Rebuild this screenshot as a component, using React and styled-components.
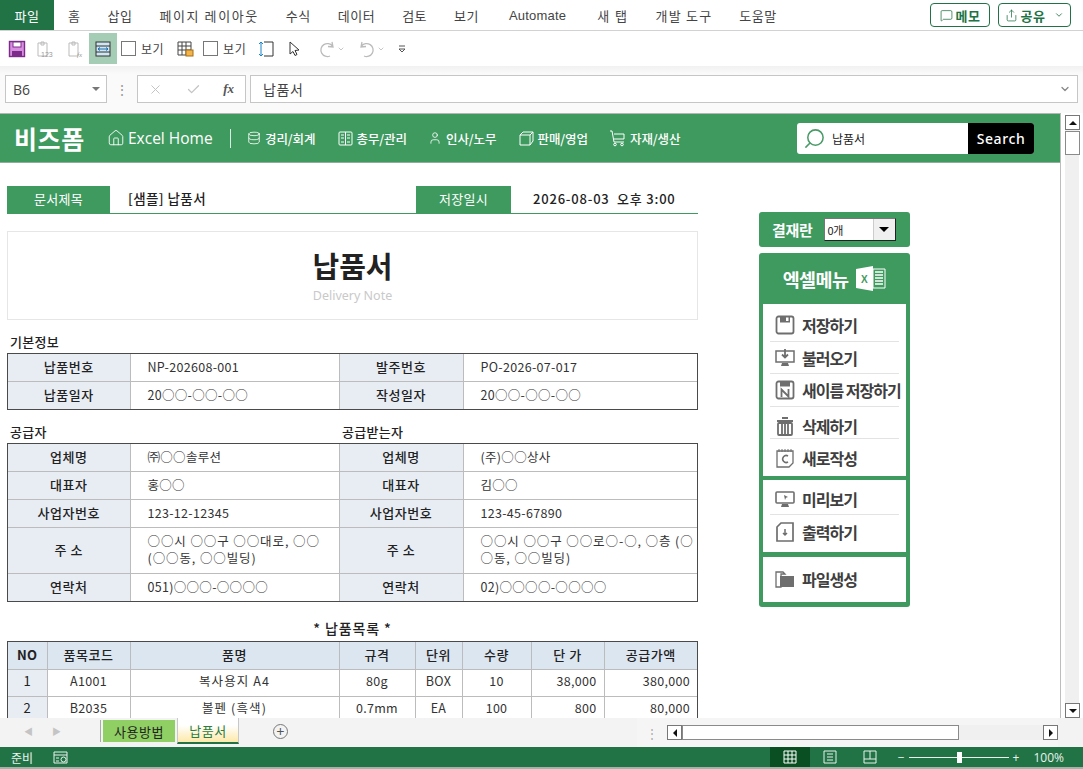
import styled, { createGlobalStyle } from 'styled-components'
import { Home, Database, User, Search as SearchIcon, X, Check, ChevronDown, MessageSquare, Share } from 'lucide-react'

const KR = `"Noto Sans CJK KR", "Noto Sans", sans-serif`
const GREEN = '#3f9a60'
const XL = '#217346'

const Global = createGlobalStyle`
  html, body { margin: 0; padding: 0; overflow: hidden; background: #fff; }
  #root { width: 1083px; height: 769px; overflow: hidden; }
  * { box-sizing: border-box; }
`

const Window = styled.div`
  width: 1083px;
  height: 769px;
  display: flex;
  flex-direction: column;
  font-family: ${KR};
  color: #222;
  background: #f3f3f3;
`

/* ribbon */
const TabBar = styled.div`
  height: 31px;
  flex: none;
  display: flex;
  align-items: center;
  background: #fff;
  border-bottom: 1px solid #d2d2d2;
  padding-right: 12px;
`
const FileTab = styled.div`
  width: 54px;
  height: 30px;
  margin-right: 14px;
  background: ${XL};
  color: #fff;
  font-size: 13px;
  letter-spacing: 0.6px;
  display: flex;
  align-items: center;
  justify-content: center;
`
const RibbonTab = styled.div`
  font-size: 13px;
  color: #444;
  margin-right: ${p => p.$mr || '27px'};
  letter-spacing: ${p => p.$sp || '0.5px'};
  margin-left: ${p => p.$ml || 0};
  font-family: ${p => (p.$latin ? '"Liberation Sans", sans-serif' : KR)};
  white-space: nowrap;
`
const TabRight = styled.div`
  margin-left: auto;
  display: flex;
  gap: 8px;
`
const OutlineBtn = styled.div`
  height: 24px;
  width: ${p => p.$w};
  border: 1px solid ${XL};
  border-radius: 4px;
  display: flex;
  align-items: center;
  justify-content: center;
  gap: 3px;
  color: ${XL};
  font-size: 13px;
  font-weight: 700;
  letter-spacing: 0.5px;
`

const Qat = styled.div`
  height: 35px;
  flex: none;
  background: #fff;
  display: flex;
  align-items: center;
  padding-left: 5px;
`
const QatBtn = styled.div`
  width: ${p => p.$w || '28px'};
  height: 31px;
  display: flex;
  align-items: center;
  justify-content: center;
  flex: none;
  background: ${p => (p.$on ? '#a5cdb5' : 'transparent')};
`
const QatCheck = styled.label`
  display: flex;
  align-items: center;
  gap: 5px;
  font-size: 12px;
  color: #444;
  letter-spacing: 0.5px;
  margin: 0 ${p => p.$mr} 0 ${p => p.$ml};
  flex: none;
  &::before {
    content: '';
    width: 13px;
    height: 13px;
    border: 1px solid #777;
    background: #fff;
  }
`

const FormulaBar = styled.div`
  height: 47px;
  flex: none;
  padding: 9px 5px 9px 5px;
  display: flex;
  align-items: stretch;
  background: linear-gradient(#f1f1f1 0, #fafafa 8px, #fafafa 100%);
`
const NameBox = styled.div`
  width: 102px;
  height: 28px;
  background: #fff;
  border: 1px solid #c6c6c6;
  display: flex;
  align-items: center;
  justify-content: space-between;
  padding: 0 6px 0 7px;
  font-size: 14px;
  color: #444;
  font-family: "Open Sans", sans-serif;
`
const Caret = styled.span`
  width: 0;
  height: 0;
  border-left: 4px solid transparent;
  border-right: 4px solid transparent;
  border-top: 4px solid #777;
`
const Dots = styled.div`
  width: 30px;
  height: 28px;
  display: flex;
  align-items: center;
  justify-content: center;
  color: #999;
  font-size: 14px;
`
const FxBox = styled.div`
  width: 109px;
  height: 28px;
  background: #fff;
  border: 1px solid #c6c6c6;
  display: flex;
  align-items: center;
  justify-content: space-between;
  padding: 0 11px 0 10px;
  color: #c4c4c4;
`
const Fx = styled.span`
  font: italic 700 13px "Liberation Serif", serif;
  color: #555;
`
const FormulaInput = styled.div`
  flex: 1;
  height: 28px;
  margin-left: 4px;
  background: #fff;
  border: 1px solid #c6c6c6;
  display: flex;
  align-items: center;
  justify-content: space-between;
  padding: 0 6px 0 12px;
  font-size: 14px;
  color: #444;
  letter-spacing: 0.6px;
`

/* sheet */
const SheetRow = styled.div`
  height: 605px;
  flex: none;
  display: flex;
  background: #fff;
`
const Sheet = styled.div`
  width: 1061px;
  height: 605px;
  overflow: hidden;
  background: #fff;
  border-top: 1px solid #b5b5b5;
  border-right: 1px solid #bdbdbd;
`
const VScroll = styled.div`
  width: 22px;
  background: #fff;
  display: flex;
  flex-direction: column;
  padding: 2px 4px 0 4px;
`
const VTrack = styled.div`
  flex: 1;
  background: #f0f0f0;
  display: flex;
  flex-direction: column;
  justify-content: space-between;
`
const ArrowBtn = styled.div`
  width: ${p => p.$w || '15px'};
  height: ${p => p.$h || '15px'};
  background: #fff;
  border: 1px solid #777;
  display: flex;
  align-items: center;
  justify-content: center;
  flex: none;
  &::after {
    content: '';
    width: 0;
    height: 0;
    border-style: solid;
    border-color: transparent;
    ${p => p.$dir === 'up' && 'border-width: 0 4px 4px; border-bottom-color: #111;'}
    ${p => p.$dir === 'down' && 'border-width: 4px 4px 0; border-top-color: #111;'}
    ${p => p.$dir === 'left' && 'border-width: 4px 4px 4px 0; border-right-color: #111;'}
    ${p => p.$dir === 'right' && 'border-width: 4px 0 4px 4px; border-left-color: #111;'}
  }
`
const VThumb = styled.div`
  width: 15px;
  height: 24px;
  margin-top: 1px;
  background: #fff;
  border: 1px solid #8a8a8a;
`

const Header = styled.div`
  height: 49px;
  background: ${GREEN};
  border-bottom: 1px solid #8fae9a;
  display: flex;
  align-items: center;
  padding: 0 26px 0 14px;
  color: #fff;
`
const Brand = styled.div`
  font-size: 25px;
  font-weight: 700;
  width: 93px;
  letter-spacing: 0.6px;
`
const HomeLink = styled.div`
  display: flex;
  align-items: center;
  gap: 3px;
  font-size: 15.5px;
  font-family: "Open Sans", sans-serif;
  width: 123px;
  white-space: nowrap;
`
const Divider = styled.div`
  width: 1px;
  height: 19px;
  background: #d8ecdf;
  margin-right: 16px;
`
const NavLink = styled.div`
  width: 90.5px;
  flex: none;
  display: flex;
  align-items: center;
  gap: 4px;
  font-size: 12.5px;
  font-weight: 500;
  letter-spacing: -0.1px;
  white-space: nowrap;
`
const SearchBox = styled.div`
  margin-left: auto;
  width: 237px;
  height: 31px;
  display: flex;
  background: #fff;
  border-radius: 3px;
  overflow: hidden;
`
const SearchField = styled.div`
  flex: 1;
  display: flex;
  align-items: center;
  gap: 6px;
  padding-left: 6px;
  font-size: 12px;
  color: #222;
`
const SearchBtn = styled.div`
  width: 66px;
  background: #000;
  color: #fff;
  font-size: 14px;
  font-weight: 500;
  letter-spacing: 0.6px;
  font-family: "Noto Sans", sans-serif;
  display: flex;
  align-items: center;
  justify-content: center;
`

const Body = styled.div`
  display: flex;
  align-items: flex-start;
  padding-left: 7px;
`
const LeftCol = styled.div`
  width: 691px;
  flex: none;
  padding-top: 23px;
`
const DocRow = styled.div`
  height: 28px;
  display: flex;
  align-items: stretch;
  border-bottom: 1px solid ${GREEN};
`
const DocLabel = styled.div`
  width: ${p => p.$w};
  background: ${GREEN};
  color: #fff;
  font-size: 13px;
  letter-spacing: 0.3px;
  padding-bottom: 2px;
  display: flex;
  align-items: center;
  justify-content: center;
`
const DocValue = styled.div`
  width: ${p => p.$w};
  padding: 0 0 3px ${p => p.$pl};
  font-size: ${p => p.$fs || '13px'};
  font-weight: 500;
  letter-spacing: ${p => p.$sp || '0.4px'};
  display: flex;
  align-items: center;
  white-space: pre;
`
const TitleBox = styled.div`
  height: 89px;
  margin-top: 17px;
  border: 1px solid #e6e6e6;
  display: flex;
  flex-direction: column;
  align-items: center;
  padding-top: 13px;
`
const Title = styled.div`
  font-size: 29px;
  line-height: 40px;
  font-weight: 700;
  color: #222;
`
const Sub = styled.div`
  font-size: 12.5px;
  line-height: 16px;
  margin-top: 3px;
  color: #c9c9c9;
  font-family: "Noto Sans", sans-serif;
`
const SectionRow = styled.div`
  display: flex;
  margin-top: ${p => p.$mt};
  height: 19px;
  align-items: center;
  font-size: 13px;
  letter-spacing: 0.3px;
  font-weight: 500;
  padding: 0 0 4px 3px;
`
const SectionCol = styled.div`
  width: 332px;
`
const CenterTitle = styled.div`
  margin-top: 16px;
  height: 23px;
  text-align: center;
  font-size: 14px;
  font-weight: 500;
  letter-spacing: 0.9px;
  padding-bottom: 4px;
`
const TableFrame = styled.div`
  width: 691px;
  border: 1px solid #4a4a4a;
`
const Table = styled.table`
  width: 689px;
  table-layout: fixed;
  border-collapse: collapse;
  border-style: hidden;
  font-size: 12.5px;
  color: #333;
`
const Tr = styled.tr`
  height: ${p => p.$h || '28px'};
`
const Th = styled.td`
  background: ${p => p.$bg || '#e8edf4'};
  text-align: center;
  font-weight: ${p => (p.$plain ? 400 : p.$bold ? 700 : 500)};
  font-size: 13px;
  letter-spacing: 0.5px;
  color: #222;
  padding: 0 0 ${p => p.$pb || '2px'};
  border: 1px solid #bcbcbc;
  ${p => p.$dark && 'border-left: 1px solid #4a4a4a;'}
`
const Td = styled.td`
  padding: 0 ${p => (p.$align === 'right' ? '7px' : '0')} ${p => p.$pb || '2px'} ${p => (p.$align ? '0' : '17px')};
  text-align: ${p => p.$align || 'left'};
  border: 1px solid #bcbcbc;
  line-height: 17px;
  letter-spacing: ${p => p.$sp || '0.3px'};
  white-space: pre-line;
`

const RightCol = styled.div`
  width: 151px;
  margin-left: 61px;
  margin-top: 49px;
  flex: none;
`
const ApprovalBar = styled.div`
  height: 35px;
  background: ${GREEN};
  border-radius: 3px;
  display: flex;
  align-items: center;
  padding-left: 13px;
  color: #fff;
  font-size: 15px;
  font-weight: 700;
  letter-spacing: -0.3px;
`
const Select = styled.div`
  width: 72px;
  height: 23px;
  margin-left: 11px;
  background: #fff;
  border: 1px solid #777;
  border-right-color: #222;
  border-bottom-color: #222;
  display: flex;
  align-items: center;
  justify-content: space-between;
  color: #222;
  font-size: 11px;
  font-weight: 400;
  padding-left: 3px;
`
const SelectBtn = styled.div`
  width: 22px;
  height: 100%;
  background: #f0f0f0;
  border-left: 1px solid #ccc;
  display: flex;
  align-items: center;
  justify-content: center;
  &::after {
    content: '';
    border-style: solid;
    border-width: 5px 5px 0;
    border-color: #000 transparent transparent;
  }
`
const MenuBox = styled.div`
  margin-top: 6px;
  height: 354px;
  background: ${GREEN};
  border-radius: 3px;
  padding: 0 4px;
  display: flex;
  flex-direction: column;
`
const MenuHead = styled.div`
  height: 51px;
  flex: none;
  display: flex;
  align-items: center;
  justify-content: center;
  gap: 8px;
  color: #fff;
  font-size: 18.5px;
  font-weight: 700;
  letter-spacing: -0.6px;
`
const MenuPanel = styled.div`
  background: #fff;
  margin-bottom: ${p => p.$mb || '4px'};
  height: ${p => p.$h};
  padding: 0 7px;
  display: flex;
  flex-direction: column;
`
const MenuItem = styled.div`
  height: ${p => p.$h || '33px'};
  display: flex;
  align-items: center;
  gap: 7px;
  padding: ${p => p.$pt || 0} 0 ${p => p.$pb || 0} 5px;
  font-size: 16px;
  font-weight: 700;
  color: #3f3f3f;
  letter-spacing: -1px;
  white-space: nowrap;
  border-bottom: ${p => (p.$last ? 0 : '1px solid #e3e3e3')};
`

/* bottom */
const SheetTabs = styled.div`
  height: 29px;
  flex: none;
  display: flex;
  align-items: center;
  background: #f3f3f3;
  padding-right: 25px;
`
const TabNav = styled.div`
  width: 101px;
  height: 22px;
  margin-bottom: 3px;
  display: flex;
  align-items: center;
  justify-content: space-between;
  color: #c4c4c4;
  font-size: 9px;
  padding: 0 39px 0 24px;
  border-right: 1px solid #aaa;
`
const SheetTab = styled.div`
  width: ${p => p.$w};
  height: ${p => (p.$active ? '26px' : '22px')};
  margin-left: ${p => p.$ml || 0};
  margin-bottom: 3px;
  background: ${p => (p.$active ? 'linear-gradient(#fff 30%, #fde9a9)' : '#8fcf63')};
  border: ${p => (p.$active ? '1px solid #c8c8c8' : 0)};
  border-top: 0;
  border-bottom: ${p => (p.$active ? `2px solid ${XL}` : 0)};
  color: ${p => (p.$active ? '#2f7d3f' : '#222')};
  font-size: 13px;
  letter-spacing: 0.5px;
  display: flex;
  align-items: center;
  justify-content: center;
`
const AddSheet = styled.div`
  width: 15px;
  height: 15px;
  margin-left: 34px;
  margin-bottom: 2px;
  border: 1px solid #777;
  border-radius: 50%;
  color: #555;
  font-size: 14px;
  line-height: 12px;
  text-align: center;
`
const HScrollWrap = styled.div`
  margin-left: auto;
  width: 421px;
  height: 29px;
  display: flex;
  align-items: center;
  background: #f5f5f5;
`
const SplitDots = styled.div`
  width: 30px;
  text-align: center;
  color: #aaa;
  font-size: 12px;
`
const HTrack = styled.div`
  flex: 1;
  height: 15px;
  display: flex;
  align-items: center;
  background: #f0f0f0;
`
const HThumb = styled.div`
  width: 277px;
  height: 15px;
  background: #fff;
  border: 1px solid #8a8a8a;
`
const Status = styled.div`
  height: 22px;
  flex: none;
  background: ${XL};
  border-bottom: 2px solid #a3b3a8;
  color: #e9f2ec;
  font-size: 12px;
  display: flex;
  align-items: center;
  padding: 0 19px 0 11px;
`
const StatusIcon = styled.span`
  margin-left: 20px;
  display: flex;
`
const Spacer = styled.div`
  flex: 1;
`
const ViewBtn = styled.div`
  width: 40px;
  height: 20px;
  background: ${p => (p.$on ? '#0a4f22' : 'transparent')};
  display: flex;
  align-items: center;
  justify-content: center;
`
const Zoom = styled.div`
  display: flex;
  align-items: center;
  margin-left: 8px;
  gap: 4px;
  font-family: "Open Sans", sans-serif;
`
const ZoomTrack = styled.div`
  width: 100px;
  height: 1px;
  background: #e9f2ec;
  position: relative;
  &::after {
    content: '';
    position: absolute;
    left: 48px;
    top: -5px;
    width: 5px;
    height: 11px;
    background: #fff;
  }
`
const ZoomValue = styled.span`
  margin-left: 10px;
`

const Ico = ({ children, s = 16, w = s, h = s }) => (
  <svg width={w} height={h} viewBox={`0 0 ${w} ${h}`} fill='none' style={{ flex: 'none' }}>
    {children}
  </svg>
)

const GREY = '#6e6e6e'
const menuIcons = {
  save: (
    <Ico s={20}>
      <rect x='1.5' y='1.5' width='17' height='17' rx='2' stroke={GREY} strokeWidth='1.8' />
      <rect x='5' y='1.5' width='10' height='6' fill={GREY} />
      <rect x='11' y='2.5' width='2.5' height='3.5' fill='#fff' />
    </Ico>
  ),
  load: (
    <Ico s={20}>
      <rect x='1' y='3' width='18' height='11' stroke={GREY} strokeWidth='1.5' />
      <path d='M7 15h6l1 3H6z' fill={GREY} />
      <path d='M10 1v8M7 6.5l3 3 3-3' stroke={GREY} strokeWidth='1.8' />
    </Ico>
  ),
  saveAs: (
    <Ico s={20}>
      <rect x='1.5' y='1.5' width='17' height='17' rx='2' stroke={GREY} strokeWidth='1.8' />
      <rect x='5' y='1.5' width='10' height='5' fill={GREY} />
      <path d='M6.5 17V9.5l7 7V9' stroke={GREY} strokeWidth='1.8' />
    </Ico>
  ),
  trash: (
    <Ico s={20}>
      <path d='M7 2h6M2 5h16' stroke={GREY} strokeWidth='2.2' />
      <rect x='3' y='7' width='14' height='12' rx='1' stroke={GREY} strokeWidth='1.8' />
      <path d='M7 8v10M10 8v10M13 8v10' stroke={GREY} strokeWidth='1.8' />
    </Ico>
  ),
  note: (
    <Ico s={20}>
      <path d='M2 3h16v12l-4 4H2z' stroke={GREY} strokeWidth='1.3' />
      <path d='M4 1v3M7 1v3M10 1v3M13 1v3M16 1v3' stroke={GREY} />
      <path d='M13 8a3.5 3.5 0 1 0 0 6' stroke={GREY} strokeWidth='1.5' />
    </Ico>
  ),
  preview: (
    <Ico s={20}>
      <rect x='1' y='3' width='18' height='11' rx='1' stroke={GREY} strokeWidth='1.6' />
      <path d='M7 15h6l1 3H6z' fill={GREY} />
      <path d='M9 6l4 2-2 .8L10 11z' fill={GREY} />
    </Ico>
  ),
  print: (
    <Ico s={20}>
      <path d='M6 1h12v18H2V5z' stroke={GREY} strokeWidth='1.7' />
      <path d='M10 7v6M8 11l2 2 2-2' stroke={GREY} strokeWidth='1.5' />
    </Ico>
  ),
  folder: (
    <Ico s={20}>
      <path d='M1 3h7l2 2h-4v13H1z' stroke={GREY} strokeWidth='1.3' />
      <path d='M5 7h14v11H5z' fill={GREY} />
    </Ico>
  ),
}

const ExcelIcon = () => (
  <Ico w={30} h={27}>
    <path d='M0 4L17 1v25L0 23z' fill='#fff' />
    <text x='5' y='18' fontSize='10' fontWeight='700' fill={GREEN} fontFamily='Liberation Sans'>X</text>
    <path d='M17 4h12v19H17z' stroke='#fff' />
    <path d='M19 7h8M19 10h8M19 13h8M19 16h8M19 19h8' stroke='#fff' strokeWidth='1.5' />
  </Ico>
)

const GridIcon = () => (
  <Ico s={15}>
    <rect x='1' y='1' width='13' height='13' rx='1' stroke='#fff' />
    <path d='M3 4h3M9 4h3M3 7h3M9 7h3M3 11h3M9 11h3M7.5 1v13' stroke='#fff' />
  </Ico>
)
const BoxIcon = () => (
  <Ico s={15}>
    <path d='M1 4h10v10H1zM1 4l3-3h10v9l-3 4M11 4l3-3' stroke='#fff' />
  </Ico>
)
const CartIcon = () => (
  <Ico s={17}>
    <path d='M1 1h2l2 11h10M5 4h10v5H5' stroke='#fff' />
    <circle cx='6' cy='14.5' r='1.3' stroke='#fff' />
    <circle cx='13' cy='14.5' r='1.3' stroke='#fff' />
  </Ico>
)

const tabs = [
  { t: '홈' }, { t: '삽입' }, { t: '페이지 레이아웃', sp: '1.6px' }, { t: '수식' }, { t: '데이터' },
  { t: '검토' }, { t: '보기' }, { t: 'Automate', latin: true, ml: '3px', sp: '0.2px', mr: '31px' }, { t: '새 탭', sp: '1.5px' },
  { t: '개발 도구', sp: '1.2px' }, { t: '도움말' },
]

const navs = [
  { t: '경리/회계', i: <Database size={14} strokeWidth={1.4} /> },
  { t: '총무/관리', i: <GridIcon /> },
  { t: '인사/노무', i: <User size={14} strokeWidth={1.4} /> },
  { t: '판매/영업', i: <BoxIcon /> },
  { t: '자재/생산', i: <CartIcon /> },
]

const infoRows = [
  { a: '업체명', b: '㈜○○솔루션', c: '업체명', d: '(주)○○상사', h: '27px' },
  { a: '대표자', b: '홍○○', c: '대표자', d: '김○○' },
  { a: '사업자번호', b: '123-12-12345', c: '사업자번호', d: '123-45-67890' },
  { a: '주 소', b: '○○시 ○○구 ○○대로, ○○\n(○○동, ○○빌딩)', c: '주 소', d: '○○시 ○○구 ○○로○-○, ○층 (○\n○동, ○○빌딩)', h: '46px', sp: '0.9px' },
  { a: '연락처', b: '051)○○○-○○○○', c: '연락처', d: '02)○○○○-○○○○' },
]

const items = [
  ['1', 'A1001', '복사용지 A4', '80g', 'BOX', '10', '38,000', '380,000'],
  ['2', 'B2035', '볼펜 (흑색)', '0.7mm', 'EA', '100', '800', '80,000'],
]

const FourCols = () => (
  <colgroup>
    <col width='122' /><col width='209' /><col width='124' /><col width='234' />
  </colgroup>
)

const App = () => {
  return (
    <Window>
      <Global />
      <TabBar>
        <FileTab>파일</FileTab>
        {tabs.map(x => (
          <RibbonTab key={x.t} $latin={x.latin} $ml={x.ml} $mr={x.mr} $sp={x.sp}>{x.t}</RibbonTab>
        ))}
        <TabRight>
          <OutlineBtn $w='60px'><MessageSquare size={13} strokeWidth={1.4} />메모</OutlineBtn>
          <OutlineBtn $w='73px'><Share size={13} strokeWidth={1.4} />공유<ChevronDown size={10} style={{ marginLeft: 6 }} /></OutlineBtn>
        </TabRight>
      </TabBar>

      <Qat>
        <QatBtn $w='23px'>
          <Ico s={18}>
            <rect x='1.5' y='1.5' width='15' height='15' fill='#d88ee0' stroke='#7d2b8b' strokeWidth='1.4' />
            <rect x='5' y='2' width='8' height='5' fill='#fff' stroke='#7d2b8b' />
            <rect x='4' y='11' width='10' height='5' fill='#7d2b8b' />
          </Ico>
        </QatBtn>
        <QatBtn $w='32px'>
          <Ico s={18}>
            <path d='M3 3h9v13H3zM6 2h3v3H6z' stroke='#bbb' />
            <text x='6' y='17' fontSize='7' fill='#999' fontFamily='Liberation Sans'>123</text>
          </Ico>
        </QatBtn>
        <QatBtn $w='29px'>
          <Ico s={18}>
            <path d='M3 3h9v13H3zM6 2h3v3H6z' stroke='#bbb' />
            <text x='11' y='17' fontSize='7' fontStyle='italic' fill='#999' fontFamily='Liberation Serif'>fx</text>
          </Ico>
        </QatBtn>
        <QatBtn $w='28px' $on>
          <Ico s={16}>
            <rect x='1' y='1' width='14' height='14' fill='#cfe6f3' stroke='#333' />
            <path d='M1 5h14M1 11h14' stroke='#333' />
            <path d='M3 8h10M3 8l2-1.5M3 8l2 1.5M13 8l-2-1.5M13 8l-2 1.5' stroke='#1a6fb0' />
          </Ico>
        </QatBtn>
        <QatCheck $ml='4px' $mr='8px'>보기</QatCheck>
        <QatBtn $w='25px'>
          <Ico s={18}>
            <path d='M2 2h13v13H2zM2 6h13M2 10h13M6 2v13M10 2v13' stroke='#444' />
            <rect x='10' y='10' width='7' height='6' fill='#f1b54c' stroke='#a86e12' />
          </Ico>
        </QatBtn>
        <QatCheck $ml='6px' $mr='8px'>보기</QatCheck>
        <QatBtn $w='24px'>
          <Ico s={18}>
            <path d='M7 2h9v14H7' stroke='#333' />
            <path d='M4 2v14M2 4l2-2 2 2M2 14l2 2 2-2' stroke='#1a84c4' />
          </Ico>
        </QatBtn>
        <QatBtn $w='32px'>
          <Ico s={18}>
            <path d='M5 2v12l3-2.5 2 4 2-1-2-4 4-.5z' fill='#fff' stroke='#333' />
          </Ico>
        </QatBtn>
        <QatBtn $w='42px'>
          <Ico s={20}>
            <path d='M15 3l1 5-5-.5M15.5 7A6.5 6.5 0 1 0 13 17' stroke='#bbb' strokeWidth='1.3' />
          </Ico>
          <ChevronDown size={8} color='#aaa' />
        </QatBtn>
        <QatBtn $w='38px'>
          <Ico s={20}>
            <path d='M5 3L4 8l5-.5M4.5 7A6.5 6.5 0 1 1 7 17' stroke='#bbb' strokeWidth='1.3' />
          </Ico>
          <ChevronDown size={8} color='#aaa' />
        </QatBtn>
        <QatBtn $w='24px'>
          <Ico s={10}>
            <path d='M2 2h6M2 5l3 3 3-3z' stroke='#555' />
          </Ico>
        </QatBtn>
      </Qat>

      <FormulaBar>
        <NameBox>B6<Caret /></NameBox>
        <Dots>⋮</Dots>
        <FxBox>
          <X size={15} strokeWidth={1.6} />
          <Check size={15} strokeWidth={2} />
          <Fx>fx</Fx>
        </FxBox>
        <FormulaInput>납품서<ChevronDown size={12} strokeWidth={2.6} color='#888' /></FormulaInput>
      </FormulaBar>

      <SheetRow>
        <Sheet>
          <Header>
            <Brand>비즈폼</Brand>
            <HomeLink><Home size={18} strokeWidth={1.2} />Excel Home</HomeLink>
            <Divider />
            {navs.map(n => (
              <NavLink key={n.t}>{n.i}{n.t}</NavLink>
            ))}
            <SearchBox>
              <SearchField>
                <SearchIcon size={23} strokeWidth={1.6} color='#4b9b68' style={{ transform: 'scaleX(-1)' }} />
                납품서
              </SearchField>
              <SearchBtn>Search</SearchBtn>
            </SearchBox>
          </Header>
          <Body>
            <LeftCol>
              <DocRow>
                <DocLabel $w='103px'>문서제목</DocLabel>
                <DocValue $w='306px' $pl='18px' $fs='13.5px'>[샘플] 납품서</DocValue>
                <DocLabel $w='95px'>저장일시</DocLabel>
                <DocValue $pl='22px' $sp='0.8px'>2026-08-03  오후 3:00</DocValue>
              </DocRow>
              <TitleBox>
                <Title>납품서</Title>
                <Sub>Delivery Note</Sub>
              </TitleBox>

              <SectionRow $mt='14px'>기본정보</SectionRow>
              <TableFrame>
                <Table>
                  <FourCols />
                  <tbody>
                    <Tr $h='27px'><Th>납품번호</Th><Td>NP-202608-001</Td><Th>발주번호</Th><Td>PO-2026-07-017</Td></Tr>
                    <Tr><Th>납품일자</Th><Td>20○○-○○-○○</Td><Th>작성일자</Th><Td>20○○-○○-○○</Td></Tr>
                  </tbody>
                </Table>
              </TableFrame>

              <SectionRow $mt='14px'>
                <SectionCol>공급자</SectionCol>
                <SectionCol>공급받는자</SectionCol>
              </SectionRow>
              <TableFrame>
                <Table>
                  <FourCols />
                  <tbody>
                    {infoRows.map(r => (
                      <Tr key={r.b} $h={r.h}>
                        <Th>{r.a}</Th><Td $sp={r.sp}>{r.b}</Td><Th $dark>{r.c}</Th><Td $sp={r.sp}>{r.d}</Td>
                      </Tr>
                    ))}
                  </tbody>
                </Table>
              </TableFrame>

              <CenterTitle>* 납품목록 *</CenterTitle>
              <TableFrame>
                <Table>
                  <colgroup>
                    <col width='39' /><col width='83' /><col width='209' /><col width='76' />
                    <col width='47' /><col width='69' /><col width='73' /><col width='93' />
                  </colgroup>
                  <tbody>
                    <Tr $h='27px'>
                      {['NO', '품목코드', '품명', '규격', '단위', '수량', '단 가', '공급가액'].map(h => (
                        <Th key={h} $bg='#dce6f1' $bold={h === 'NO'}>{h}</Th>
                      ))}
                    </Tr>
                    {items.map(r => (
                      <Tr key={r[0]} $h='27px'>
                        <Th $bg='#e8edf4' $plain $pb='4px'>{r[0]}</Th>
                        <Td $pb='4px' $align='center'>{r[1]}</Td>
                        <Td $pb='4px' $align='center' $sp='1.1px'>{r[2]}</Td>
                        <Td $pb='4px' $align='center'>{r[3]}</Td>
                        <Td $pb='4px' $align='center'>{r[4]}</Td>
                        <Td $pb='4px' $align='center'>{r[5]}</Td>
                        <Td $pb='4px' $align='right'>{r[6]}</Td>
                        <Td $pb='4px' $align='right'>{r[7]}</Td>
                      </Tr>
                    ))}
                  </tbody>
                </Table>
              </TableFrame>
            </LeftCol>

            <RightCol>
              <ApprovalBar>
                결재란
                <Select>0개<SelectBtn /></Select>
              </ApprovalBar>
              <MenuBox>
                <MenuHead>엑셀메뉴<ExcelIcon /></MenuHead>
                <MenuPanel $h='172px'>
                  <MenuItem $h='38px' $pt='4px'>{menuIcons.save}저장하기</MenuItem>
                  <MenuItem $h='32px'>{menuIcons.load}불러오기</MenuItem>
                  <MenuItem $h='33px'>{menuIcons.saveAs}새이름 저장하기</MenuItem>
                  <MenuItem $h='32px' $pt='6px'>{menuIcons.trash}삭제하기</MenuItem>
                  <MenuItem $h='37px' $last>{menuIcons.note}새로작성</MenuItem>
                </MenuPanel>
                <MenuPanel $h='72px' $mb='5px'>
                  <MenuItem $h='35px' $pt='4px'>{menuIcons.preview}미리보기</MenuItem>
                  <MenuItem $h='37px' $pb='4px' $last>{menuIcons.print}출력하기</MenuItem>
                </MenuPanel>
                <MenuPanel $h='45px'>
                  <MenuItem $h='45px' $pb='2px' $last>{menuIcons.folder}파일생성</MenuItem>
                </MenuPanel>
              </MenuBox>
            </RightCol>
          </Body>
        </Sheet>
        <VScroll>
          <VTrack>
            <div>
              <ArrowBtn $dir='up' />
              <VThumb />
            </div>
            <ArrowBtn $dir='down' />
          </VTrack>
        </VScroll>
      </SheetRow>

      <SheetTabs>
        <TabNav><span>◀</span><span>▶</span></TabNav>
        <SheetTab $w='72px' $ml='2px'>사용방법</SheetTab>
        <SheetTab $w='62px' $ml='2px' $active>납품서</SheetTab>
        <AddSheet>+</AddSheet>
        <HScrollWrap>
          <SplitDots>⋮</SplitDots>
          <HTrack>
            <ArrowBtn $dir='left' />
            <HThumb />
          </HTrack>
          <ArrowBtn $dir='right' />
        </HScrollWrap>
      </SheetTabs>

      <Status>
        <span>준비</span>
        <StatusIcon>
          <Ico s={15}>
            <path d='M1 2h13v11H1zM1 5h13M3 8h3M3 11h3' stroke='#e9f2ec' />
            <circle cx='10.5' cy='9.5' r='2.5' stroke='#e9f2ec' />
          </Ico>
        </StatusIcon>
        <Spacer />
        <ViewBtn $on>
          <Ico s={14}>
            <path d='M1 1h12v12H1zM1 5h12M1 9h12M5 1v12M9 1v12' stroke='#fff' />
          </Ico>
        </ViewBtn>
        <ViewBtn>
          <Ico s={14}>
            <path d='M1 1h12v12H1z' stroke='#e9f2ec' />
            <path d='M4 4h6M4 7h6M4 10h6' stroke='#e9f2ec' />
          </Ico>
        </ViewBtn>
        <ViewBtn>
          <Ico s={14}>
            <path d='M1 1h12v12H1zM1 9h12M7 1v8' stroke='#e9f2ec' />
          </Ico>
        </ViewBtn>
        <Zoom>
          <span>−</span>
          <ZoomTrack />
          <span>+</span>
          <ZoomValue>100%</ZoomValue>
        </Zoom>
      </Status>
    </Window>
  );
}

export default App;
